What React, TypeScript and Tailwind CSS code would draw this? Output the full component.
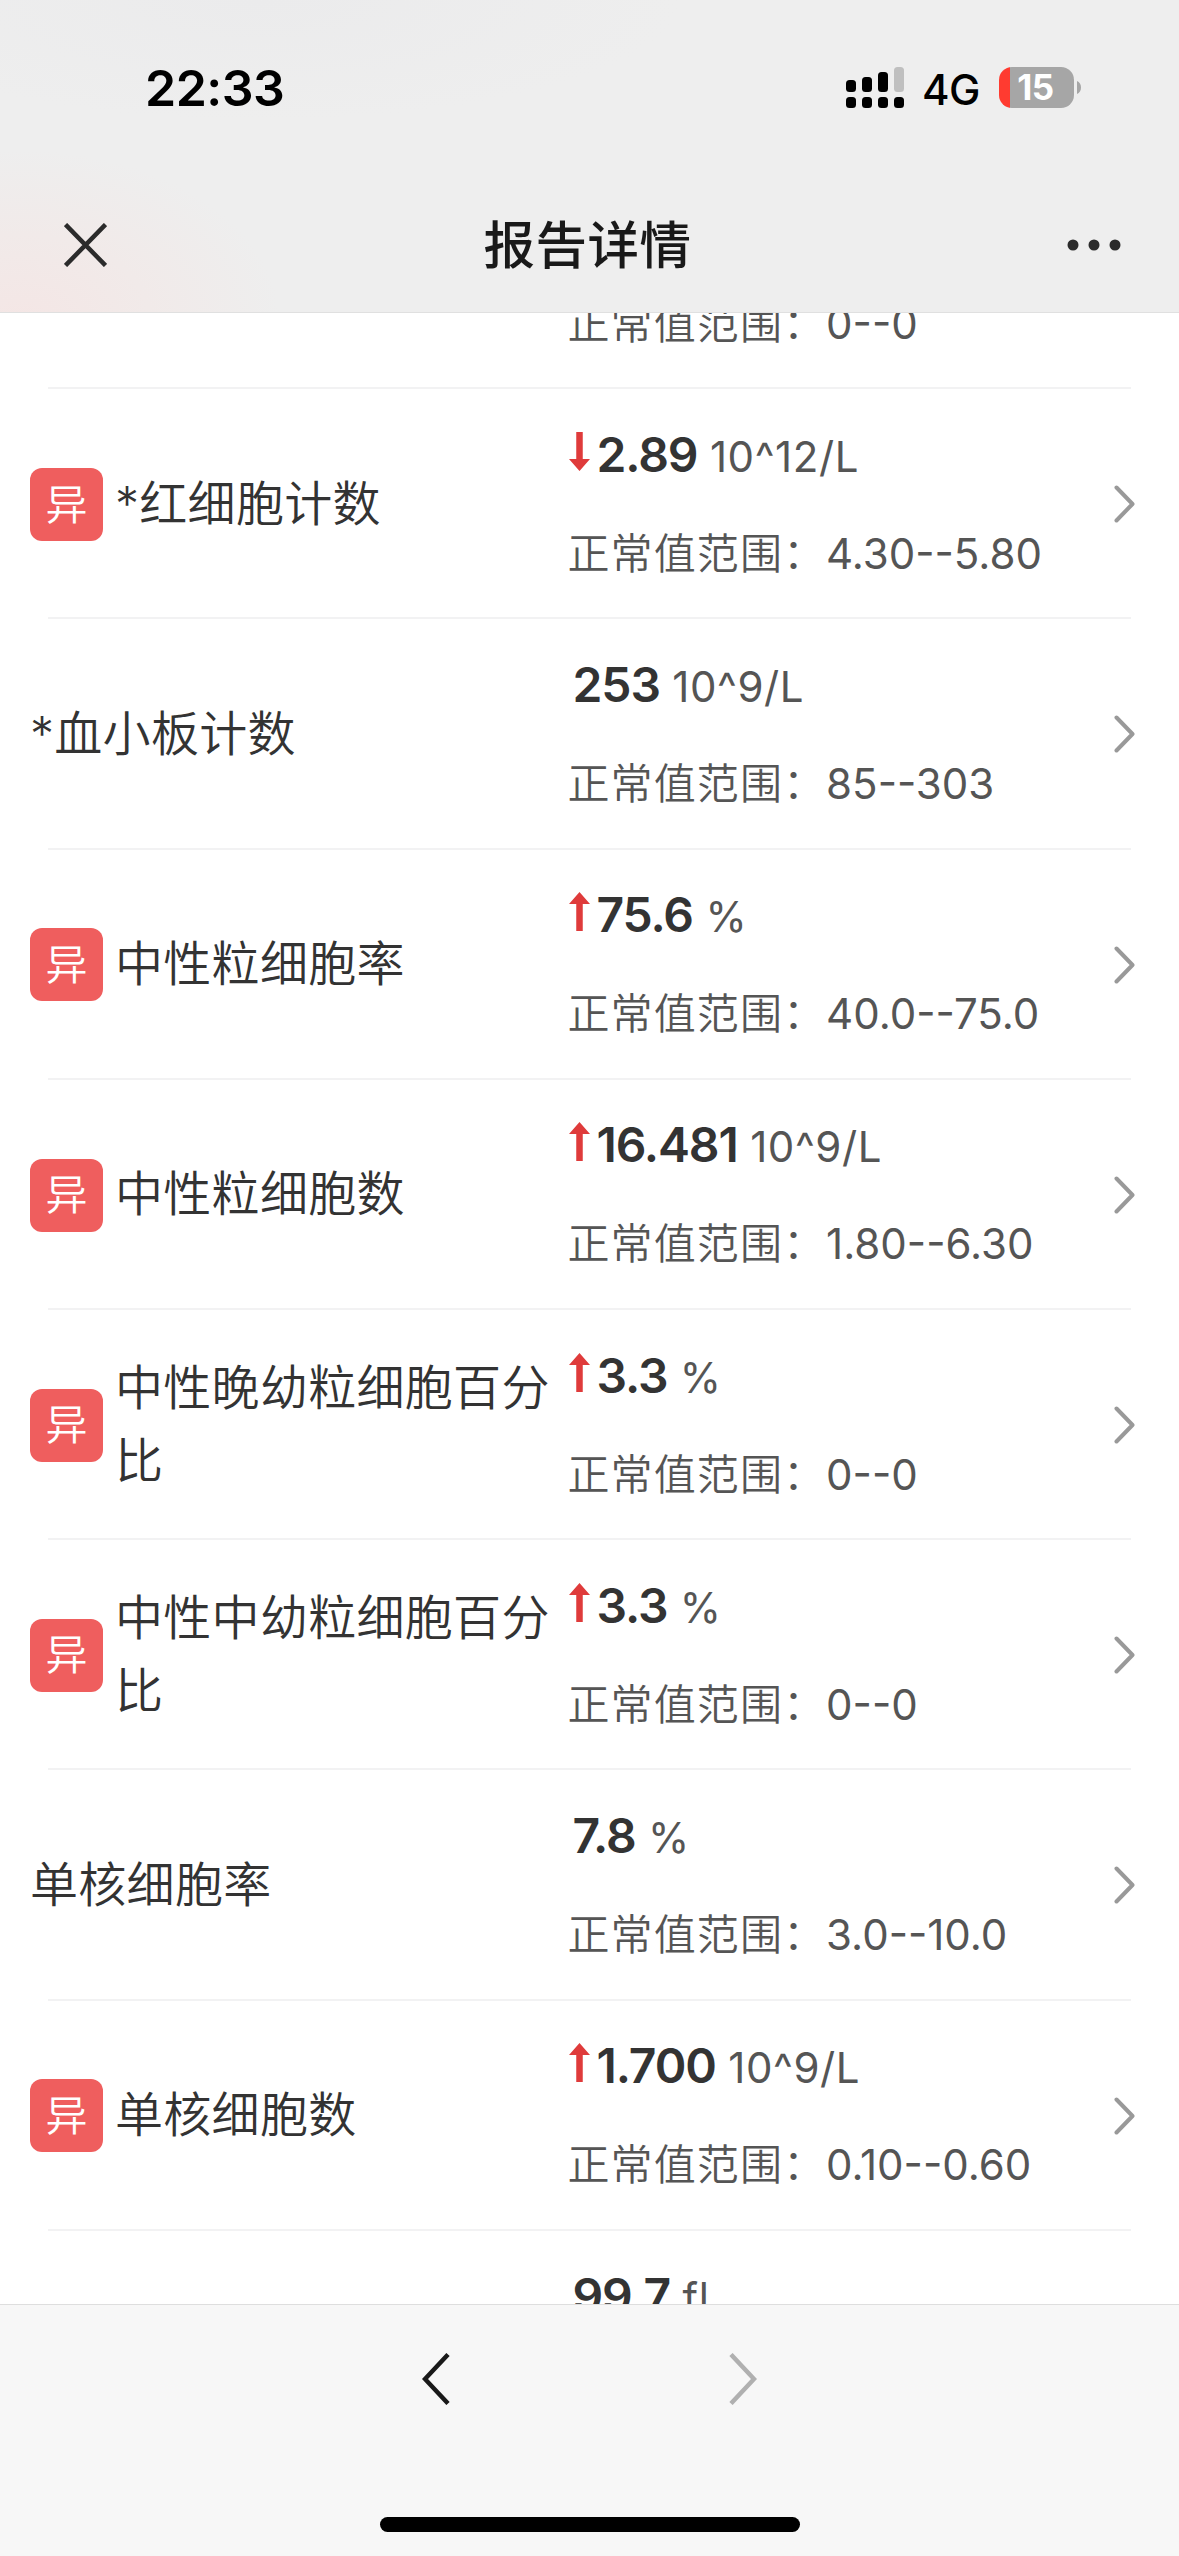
type Trend = 'up' | 'down';

interface ReportItem {
  name?: string;
  abnormal?: boolean;
  trend?: Trend;
  value?: string;
  unit?: string;
  range?: string;
}

const items: ReportItem[] = [
  { range: '0--0' },
  { name: '*红细胞计数', abnormal: true, trend: 'down', value: '2.89', unit: '10^12/L', range: '4.30--5.80' },
  { name: '*血小板计数', value: '253', unit: '10^9/L', range: '85--303' },
  { name: '中性粒细胞率', abnormal: true, trend: 'up', value: '75.6', unit: '%', range: '40.0--75.0' },
  { name: '中性粒细胞数', abnormal: true, trend: 'up', value: '16.481', unit: '10^9/L', range: '1.80--6.30' },
  { name: '中性晚幼粒细胞百分比', abnormal: true, trend: 'up', value: '3.3', unit: '%', range: '0--0' },
  { name: '中性中幼粒细胞百分比', abnormal: true, trend: 'up', value: '3.3', unit: '%', range: '0--0' },
  { name: '单核细胞率', value: '7.8', unit: '%', range: '3.0--10.0' },
  { name: '单核细胞数', abnormal: true, trend: 'up', value: '1.700', unit: '10^9/L', range: '0.10--0.60' },
  { value: '99.7', unit: 'fl' },
];

const TrendArrow = ({ trend }: { trend: Trend }) => (
  <svg
    className={trend === 'down' ? 'mr-[7px] mb-[9px] ml-px h-[39px] w-[21px] rotate-180' : 'mr-[7px] mb-[9px] ml-px h-[39px] w-[21px]'}
    viewBox="0 0 21 39"
    fill="#df3b3b"
  >
    <path d="M10.500 0 21 12H13.750V39H7.250V12H0Z" />
  </svg>
);

const StatusBar = () => (
  <div className="flex h-[177px] items-start justify-between pt-[67px] pr-[98px] pl-[145px]">
    <span className="text-[50px] leading-[42px] font-semibold tracking-[-0.5px] text-black">22:33</span>
    <div className="flex h-[41px] items-center">
      <svg className="h-[41px] w-[58px]" viewBox="0 0 58 41">
        <rect x="0" y="13" width="10" height="12" rx="3.5" />
        <rect x="16" y="10" width="10" height="15" rx="3.5" />
        <rect x="32" y="5" width="10" height="20" rx="3.5" />
        <rect x="48" y="0" width="10" height="25" rx="3.5" fill="#bfbfbf" />
        <rect x="0" y="30" width="10" height="11" rx="3.5" />
        <rect x="16" y="30" width="10" height="11" rx="3.5" />
        <rect x="32" y="30" width="10" height="11" rx="3.5" />
        <rect x="48" y="30" width="10" height="11" rx="3.5" />
      </svg>
      <span className="mt-[3px] ml-[18px] w-[77px] text-[42px] leading-[41px] font-medium tracking-[-0.5px] text-black">4G</span>
      {/* 电池 */}
      <div className="flex h-[41px] w-[75px] items-center justify-center overflow-hidden rounded-[13px] bg-[linear-gradient(to_right,#ff3b30_11px,#a6a6a6_11px)] pr-[2px] text-[35px] leading-none font-bold tracking-[-0.5px] text-white">
        15
      </div>
      <svg className="ml-[3px] h-[13px] w-1" viewBox="0 0 4 13">
        <path d="M0 0C2.500 1 4 3.500 4 6.500S2.500 12 0 13Z" fill="#a6a6a6" />
      </svg>
    </div>
  </div>
);

const Header = () => (
  <header className="h-[313px] shrink-0 border-b border-[#e0e0e0] bg-[#eeeeee] bg-[radial-gradient(ellipse_260px_170px_at_20px_320px,#f4e6e5_0%,#f1eae9_50%,#f1eae900_100%),radial-gradient(ellipse_420px_120px_at_260px_0px,#ebebec_0%,#ebebec00_100%)]">
    <StatusBar />
    <div className="flex h-[135px] items-center justify-between pr-[58px] pl-16">
      <svg className="h-11 w-[43px]" viewBox="0 0 43 44" fill="none" stroke="#2b2b2b" strokeWidth="4.500">
        <path d="M1.500 1.500 41.500 42.500M41.500 1.500 1.500 42.500" />
      </svg>
      <h1 className="pl-px text-[51.5px] leading-[60px] font-medium tracking-[0.5px] text-[#191919]">报告详情</h1>
      <svg className="h-3 w-[54px]" viewBox="0 0 54 12" fill="#2b2b2b">
        <circle cx="6" cy="6" r="5.500" />
        <circle cx="27" cy="6" r="5.500" />
        <circle cx="48" cy="6" r="5.500" />
      </svg>
    </div>
  </header>
);

const ReportRow = ({ item }: { item: ReportItem }) => (
  <li className="flex h-[230.2px] shrink-0 flex-col">
    <div className="flex flex-1 items-center pr-11 pl-[30px]">
      <div className="flex w-[537.5px] items-center">
        {item.abnormal && (
          <span className="mt-[2.5px] mr-[12px] flex size-[73px] shrink-0 items-center justify-center rounded-[12px] bg-[#ef5e5e] text-[42px] leading-none font-[350] text-white">
            异
          </span>
        )}
        <span className="text-[48px] leading-[73px] font-[350] tracking-[0.3px] text-[#333333]">{item.name}</span>
      </div>
      <div className="flex-1 pt-[3px] text-[42px] text-[#555555]">
        <div className="flex h-[98px] items-center">
          {item.trend && <TrendArrow trend={item.trend} />}
          <p className="leading-[98px] whitespace-pre">
            <span
              className={
                item.trend
                  ? 'text-[48px] font-semibold tracking-[-1.1px] text-[#333333]'
                  : 'ml-[5px] text-[48px] font-semibold tracking-[-1.1px] text-[#333333]'
              }
            >
              {item.value}
            </span>
            <span className="tracking-[0.6px]"> {item.unit}</span>
          </p>
        </div>
        <p className="h-[98px] leading-[98px] whitespace-nowrap">
          {item.range && (
            <>
              <span className="font-[350] tracking-[1.1px]">正常值范围：</span>
              {item.range}
            </>
          )}
        </p>
      </div>
      <svg className="mt-[2px] h-[38px] w-[21px]" viewBox="0 0 21 38" fill="none" stroke="#999999" strokeWidth="4" strokeLinecap="round" strokeLinejoin="round">
        <path d="M2.500 2.500 18.500 19 2.500 35.500" />
      </svg>
    </div>
    <div className="mx-12 h-0.5 shrink-0 bg-[#f2f2f3]" />
  </li>
);

const BottomBar = () => (
  <footer className="flex h-[252px] shrink-0 flex-col items-center justify-between border-t border-[#dedede] bg-[#f7f7f7] pt-12 pb-6">
    <div className="flex gap-[279px]">
      <svg className="h-[52px] w-7" viewBox="0 0 28 52" fill="none" stroke="#191919" strokeWidth="4.500">
        <path d="M26 1.500 3 26 26 50.500" />
      </svg>
      <svg className="h-[52px] w-7" viewBox="0 0 28 52" fill="none" stroke="#b0b0b0" strokeWidth="4.500">
        <path d="M2 1.500 25 26 2 50.500" />
      </svg>
    </div>
    <div className="h-[15px] w-[420px] rounded-full bg-black" />
  </footer>
);

const App = () => {
  return (
    <div className="flex h-[2556px] w-[1179px] flex-col overflow-hidden bg-white font-['Inter','Noto_Sans_CJK_SC',sans-serif]">
      <Header />
      <ul className="-mt-[154px] flex min-h-0 flex-1 flex-col overflow-hidden [clip-path:inset(154px_0_0_0)]">
        {items.map((item, i) => (
          <ReportRow key={i} item={item} />
        ))}
      </ul>
      <BottomBar />
    </div>
  );
};

export default App;
